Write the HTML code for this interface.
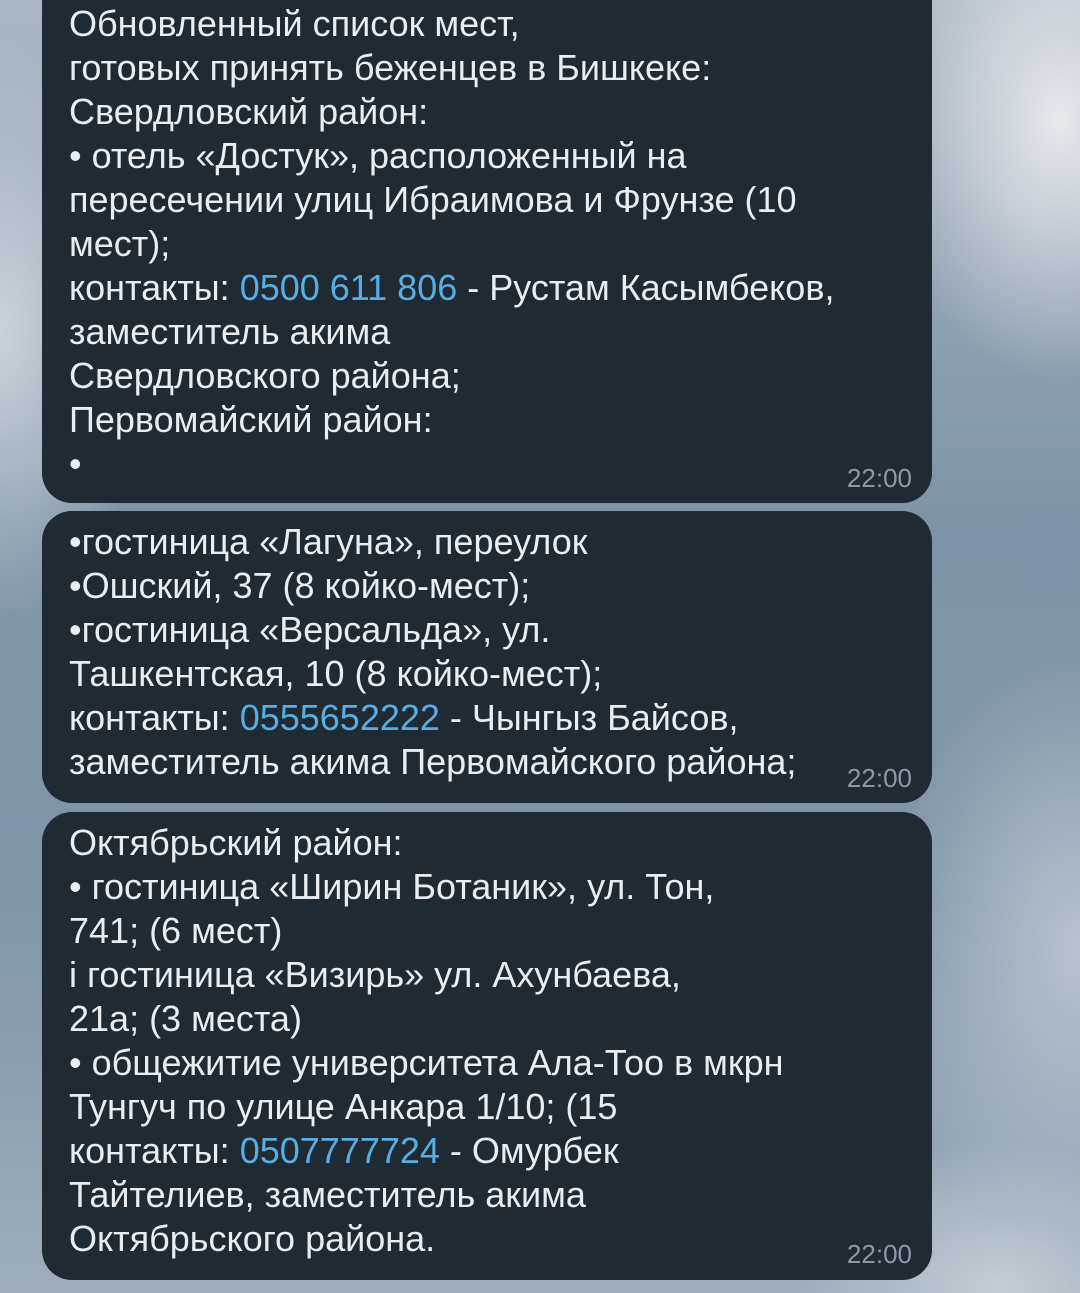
<!DOCTYPE html>
<html><head><meta charset="utf-8"><style>
html,body{margin:0;padding:0}
body{width:1080px;height:1293px;overflow:hidden;position:relative;
background:
radial-gradient(ellipse 180px 260px at 1060px 120px,#e6e8ec 0%,rgba(220,224,230,0) 100%),
radial-gradient(ellipse 150px 300px at 0px 330px,#c9d2da 0%,rgba(200,210,218,0) 100%),
radial-gradient(ellipse 200px 300px at 1080px 950px,#b8c3cd 0%,rgba(180,192,204,0) 100%),
radial-gradient(ellipse 200px 150px at 1000px 1290px,#c2ccd4 0%,rgba(190,200,210,0) 100%),
linear-gradient(180deg,#a9b6c2 0%,#7f93a6 40%,#8195a7 70%,#9eadbb 100%);
font-family:"Liberation Sans","DejaVu Sans",sans-serif;}
.b{position:absolute;left:42px;width:890px;background:#1f2a33;border-radius:30px;color:#e9edf0}
.l{position:absolute;left:27px;font-size:36px;white-space:pre;line-height:44px;letter-spacing:0px}
.a{color:#58aee4}
.t{position:absolute;right:20px;font-size:26px;color:#8a99a6}
</style></head><body>
<div class="b" style="top:-30px;height:533px">
<div class="l" style="top:32px">Обновленный список мест,</div>
<div class="l" style="top:76px">готовых принять беженцев в Бишкеке:</div>
<div class="l" style="top:120px">Свердловский район:</div>
<div class="l" style="top:164px">• отель «Достук», расположенный на</div>
<div class="l" style="top:208px">пересечении улиц Ибраимова и Фрунзе (10</div>
<div class="l" style="top:252px">мест);</div>
<div class="l" style="top:296px">контакты: <span class="a">0500 611 806</span> - Рустам Касымбеков,</div>
<div class="l" style="top:340px">заместитель акима</div>
<div class="l" style="top:384px">Свердловского района;</div>
<div class="l" style="top:428px">Первомайский район:</div>
<div class="l" style="top:472px">•</div>
<div class="t" style="top:493px">22:00</div>
</div>
<div class="b" style="top:511px;height:292px">
<div class="l" style="top:9px">•гостиница «Лагуна», переулок</div>
<div class="l" style="top:53px">•Ошский, 37 (8 койко-мест);</div>
<div class="l" style="top:97px">•гостиница «Версальда», ул.</div>
<div class="l" style="top:141px">Ташкентская, 10 (8 койко-мест);</div>
<div class="l" style="top:185px">контакты: <span class="a">0555652222</span> - Чынгыз Байсов,</div>
<div class="l" style="top:229px">заместитель акима Первомайского района;</div>
<div class="t" style="top:252px">22:00</div>
</div>
<div class="b" style="top:812px;height:468px">
<div class="l" style="top:9px">Октябрьский район:</div>
<div class="l" style="top:53px">• гостиница «Ширин Ботаник», ул. Тон,</div>
<div class="l" style="top:97px">741; (6 мест)</div>
<div class="l" style="top:141px">і гостиница «Визирь» ул. Ахунбаева,</div>
<div class="l" style="top:185px">21а; (3 места)</div>
<div class="l" style="top:229px">• общежитие университета Ала-Тоо в мкрн</div>
<div class="l" style="top:273px">Тунгуч по улице Анкара 1/10; (15</div>
<div class="l" style="top:317px">контакты: <span class="a">0507777724</span> - Омурбек</div>
<div class="l" style="top:361px">Тайтелиев, заместитель акима</div>
<div class="l" style="top:405px">Октябрьского района.</div>
<div class="t" style="top:427px">22:00</div>
</div>
</body></html>
